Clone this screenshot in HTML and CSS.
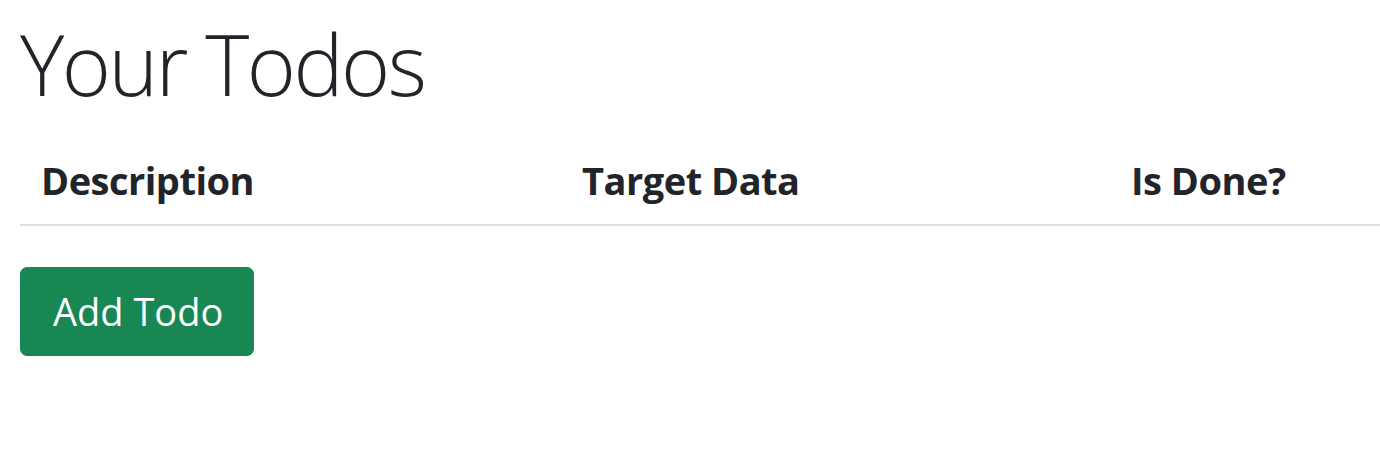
FILE: index.html
```html
<!DOCTYPE html>
<html>
<head>
<meta charset="utf-8">
<link rel="stylesheet" href="styles.css">
</head>
<body>
<div class="container">
  <h1 class="title">Your Todos</h1>
  <table class="todo-table">
    <colgroup>
      <col class="col-desc">
      <col class="col-date">
      <col class="col-done">
    </colgroup>
    <thead>
      <tr>
        <th>Description</th>
        <th>Target Data</th>
        <th>Is Done?</th>
      </tr>
    </thead>
    <tbody></tbody>
  </table>
  <button class="btn-add" type="button">Add Todo</button>
</div>
</body>
</html>
```
FILE: styles.css
```css
html, body {
  margin: 0;
  padding: 0;
  background: #fff;
}
body {
  font-family: "Open Sans", "Noto Sans", sans-serif;
  color: #212529;
}
.container {
  padding: 14px 0 0 20px;
}
.title {
  margin: 0 0 16px 0;
  font-size: 84px;
  font-weight: 300;
  letter-spacing: -2.5px;
  line-height: 1.2;
  color: #212529;
}
.todo-table {
  width: 1360px;
  border-collapse: collapse;
  table-layout: fixed;
  margin-bottom: 41px;
}
.col-desc { width: 541px; }
.col-date { width: 549px; }
.col-done { width: 270px; }
.todo-table th {
  text-align: left;
  font-size: 38px;
  font-weight: 700;
  letter-spacing: -0.5px;
  line-height: 1.5;
  padding: 21px 21px 15px 21px;
  border-bottom: 2px solid #dee2e6;
}
.btn-add {
  display: block;
  height: 89px;
  width: 234px;
  padding: 0 0 0 32px;
  text-align: left;
  background: #198754;
  color: #fff;
  border: 1px solid #198754;
  border-radius: 7px;
  font-family: "Open Sans", "Noto Sans", sans-serif;
  font-size: 38px;
  font-weight: 400;
  line-height: 1.5;
}
```
